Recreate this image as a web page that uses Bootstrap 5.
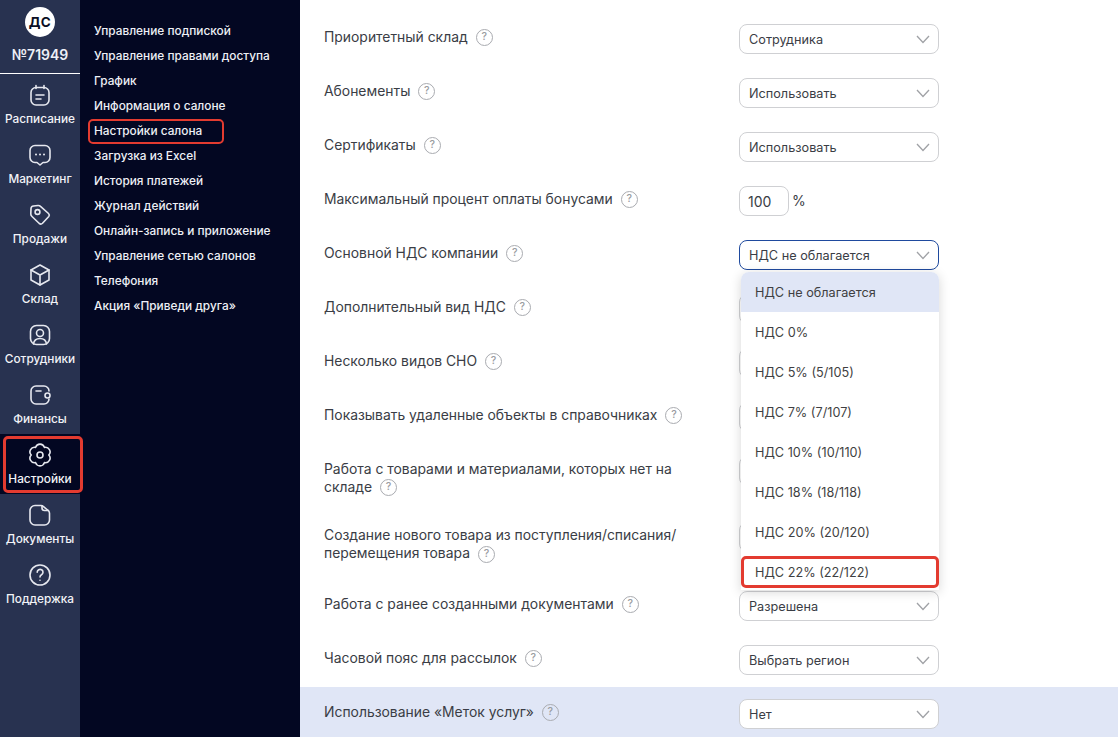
<!doctype html>
<html lang="ru"><head><meta charset="utf-8">
<link href="https://cdn.jsdelivr.net/npm/bootstrap@5.3.0/dist/css/bootstrap.min.css" rel="stylesheet">
<style>
html,body{height:100%}
body{font-family:Inter,"Noto Sans",sans-serif;font-size:13.9px;color:#3a3d45;overflow:hidden;background:#fff}
.shell{height:737px;overflow:hidden}
.rail{width:80px;background:#283250;color:#fff;flex:none}
.brand{height:74px;border-bottom:1px solid #fff;padding-top:7px}
.ava{width:30px;height:30px;border-radius:50%;background:#fff;color:#0b0f25;font-weight:700;font-size:13.5px;letter-spacing:.5px;line-height:30px;text-align:center}
.brand-no{font-size:14px;font-weight:600;line-height:18px;margin-top:9px;color:#eef0f6}
.rail-item{height:60px;padding-top:6px;font-size:11.8px;font-weight:500;line-height:14px;color:#f2f3f7;text-decoration:none;position:relative;white-space:nowrap}
.rail-item svg{width:24px;height:24px;margin-top:3px;margin-bottom:5px;flex:none;fill:none;stroke:#e6e8ef;stroke-width:1.6;stroke-linecap:round;stroke-linejoin:round}
.rail-item.on{background:#030722}
.mark-box{position:absolute;border:3px solid #e33b30;border-radius:5px;pointer-events:none}
.mb-rail{left:3px;right:-3px;top:2px;bottom:1px}
.sub{width:220px;background:#030722;flex:none;padding-top:19px}
.sub a{display:block;position:relative;height:25px;line-height:25px;padding-left:14px;color:#eef0f6;font-size:11.85px;font-weight:500;text-decoration:none;white-space:nowrap}
.mb-sub{left:8px;top:0;width:136px;height:25px;border-width:2.5px}
.main{flex:1;min-width:0;position:relative;padding-top:12px}
.set-row{display:flex;align-items:flex-start;padding:12px 0 12px 24px;height:54px}
.set-row.hl{background:#e0e6f6;height:50px;padding-bottom:0}
.set-row.tall-a{height:66px}
.set-row.tall-b{height:69px}
.set-row.tall-b .lbl{padding-top:5px;line-height:17.5px}
.lbl{width:385px;margin-right:30px;flex:none;line-height:18px;padding-top:4px}
.q{display:inline-flex;width:17px;height:17px;border:1px solid #a9abb0;border-radius:50%;color:#9a9ca1;font-size:10.5px;font-weight:500;align-items:center;justify-content:center;margin-left:8px;vertical-align:top;margin-top:1px;line-height:1}
.sel{width:200px;height:30px;border:1px solid #cfd0d3;border-radius:8px;background:#fff;padding:1px 9px 0;font-size:12.7px;line-height:28px;position:relative;flex:none}
.sel svg{position:absolute;right:8px;top:10px;width:14px;height:9px;fill:none;stroke:#a0a2a6;stroke-width:1.3}
.sel.open{border-color:#1f4a9e}
.num{width:50px;height:30px;border:1px solid #cfd0d3;border-radius:8px;padding:1px 8px 0;font-size:14px;line-height:28px;background:#fff}
.pct{font-size:14px;margin:4px 0 0 3px}
.drop{position:absolute;left:441px;top:272px;width:198px;height:318px;background:#fff;border-radius:8px 8px 0 0;box-shadow:0 2px 12px rgba(0,0,0,.16)}
.drop div{height:40px;line-height:42px;padding-left:14px;font-size:12.7px;color:#3f3f42;position:relative}
.drop div.act{background:#e0e6f6;border-radius:8px 8px 0 0}
.mb-opt{left:0;right:0;top:4px;height:32px}
</style></head><body>
<div class="shell d-flex">
<nav class="rail d-flex flex-column">
 <div class="brand d-flex flex-column align-items-center"><div class="ava">ДС</div><div class="brand-no">№71949</div></div>
 <a class="rail-item d-flex flex-column align-items-center" href="#"><svg viewBox="0 0 24 24"><rect x="3" y="4.500" width="18" height="17.500" rx="5"/><path d="M8 2.500v3M16 2.500v3M8 12h8M8 16h5"/></svg>Расписание</a>
 <a class="rail-item d-flex flex-column align-items-center" href="#"><svg viewBox="0 0 24 24"><path d="M7 2.500h10a5 5 0 0 1 5 5v7a5 5 0 0 1-5 5h-2l-3 2.500-3-2.500H7a5 5 0 0 1-5-5v-7a5 5 0 0 1 5-5z"/><path stroke-width="2" d="M8 11.500h.01M12 11.500h.01M16 11.500h.01"/></svg>Маркетинг</a>
 <a class="rail-item d-flex flex-column align-items-center" href="#"><svg viewBox="0 0 24 24"><path d="M5.500 3L10 2.500Q11.500 2.400 12.500 3.400L20.500 10.500Q22 12 20.800 13.500L14.500 20.300Q13 21.800 11.300 20.500L4 13.500Q2.800 12.400 2.800 11L3 5.500Q3.100 3.300 5.500 3z"/><circle cx="9.500" cy="9" r="2.400"/></svg>Продажи</a>
 <a class="rail-item d-flex flex-column align-items-center" href="#"><svg viewBox="0 0 24 24"><path d="M12 2l9 5v10l-9 5-9-5V7z"/><path d="M3 7l9 5 9-5M12 12v10"/></svg>Склад</a>
 <a class="rail-item d-flex flex-column align-items-center" href="#"><svg viewBox="0 0 24 24"><rect x="2.500" y="2.500" width="19" height="19" rx="6"/><circle cx="12" cy="10" r="3.500"/><path d="M5.500 21c.5-4 3-5.500 6.500-5.500s6 1.500 6.500 5.500"/></svg>Сотрудники</a>
 <a class="rail-item d-flex flex-column align-items-center" href="#"><svg viewBox="0 0 24 24"><path d="M21 8V8a5 5 0 0 0-5-5H8a5 5 0 0 0-5 5v8a5 5 0 0 0 5 5h8a5 5 0 0 0 5-5"/><path d="M8 8h5"/><rect x="17" y="10" width="5" height="5" rx="2.500"/></svg>Финансы</a>
 <a class="rail-item on d-flex flex-column align-items-center" href="#"><svg viewBox="0 0 24 24"><path d="M7.600 4.380A4.600 4.600 0 0 1 16.400 4.380A4.600 4.600 0 0 1 20.800 12A4.600 4.600 0 0 1 16.400 19.620A4.600 4.600 0 0 1 7.600 19.620A4.600 4.600 0 0 1 3.200 12A4.600 4.600 0 0 1 7.600 4.380z"/><circle cx="12" cy="12" r="3"/></svg>Настройки<span class="mark-box mb-rail"></span></a>
 <a class="rail-item d-flex flex-column align-items-center" href="#"><svg viewBox="0 0 24 24"><path d="M7 2.500h6q1.200 0 2.200.8l5 4.200q1.300 1.100 1.300 2.700V17a5 5 0 0 1-5 5H7a5 5 0 0 1-5-5V7.500a5 5 0 0 1 5-5z"/><path d="M14 2.700V5a2.500 2.500 0 0 0 2.500 2.500h4"/></svg>Документы</a>
 <a class="rail-item d-flex flex-column align-items-center" href="#"><svg viewBox="0 0 24 24"><circle cx="12" cy="12" r="10"/><path d="M9.200 9.200a2.900 2.900 0 1 1 4.300 2.600c-.9.500-1.500 1.100-1.500 2.200M12 17.200h.01"/></svg>Поддержка</a>
</nav>
<aside class="sub">
 <a href="#">Управление подпиской</a><a href="#">Управление правами доступа</a><a href="#">График</a><a href="#">Информация о салоне</a>
 <a href="#">Настройки салона<span class="mark-box mb-sub"></span></a>
 <a href="#">Загрузка из Excel</a><a href="#">История платежей</a><a href="#">Журнал действий</a><a href="#">Онлайн-запись и приложение</a><a href="#">Управление сетью салонов</a><a href="#">Телефония</a><a href="#">Акция «Приведи друга»</a>
</aside>
<main class="main">
 <div class="set-row"><div class="lbl">Приоритетный склад<span class="q">?</span></div><div class="sel">Сотрудника<svg viewBox="0 0 14 9"><path d="M1 1l6 6.500L13 1"/></svg></div></div>
 <div class="set-row"><div class="lbl">Абонементы<span class="q">?</span></div><div class="sel">Использовать<svg viewBox="0 0 14 9"><path d="M1 1l6 6.500L13 1"/></svg></div></div>
 <div class="set-row"><div class="lbl">Сертификаты<span class="q">?</span></div><div class="sel">Использовать<svg viewBox="0 0 14 9"><path d="M1 1l6 6.500L13 1"/></svg></div></div>
 <div class="set-row"><div class="lbl">Максимальный процент оплаты бонусами<span class="q">?</span></div><div class="num">100</div><div class="pct">%</div></div>
 <div class="set-row"><div class="lbl">Основной НДС компании<span class="q">?</span></div><div class="sel open">НДС не облагается<svg viewBox="0 0 14 9"><path d="M1 1l6 6.500L13 1"/></svg></div></div>
 <div class="set-row"><div class="lbl">Дополнительный вид НДС<span class="q">?</span></div><div class="sel"></div></div>
 <div class="set-row"><div class="lbl">Несколько видов СНО<span class="q">?</span></div><div class="sel"></div></div>
 <div class="set-row"><div class="lbl">Показывать удаленные объекты в справочниках<span class="q">?</span></div><div class="sel"></div></div>
 <div class="set-row tall-a"><div class="lbl">Работа с товарами и материалами, которых нет на складе<span class="q">?</span></div><div class="sel"></div></div>
 <div class="set-row tall-b"><div class="lbl">Создание нового товара из поступления/списания/перемещения товара<span class="q">?</span></div><div class="sel"></div></div>
 <div class="set-row"><div class="lbl">Работа с ранее созданными документами<span class="q">?</span></div><div class="sel">Разрешена<svg viewBox="0 0 14 9"><path d="M1 1l6 6.500L13 1"/></svg></div></div>
 <div class="set-row"><div class="lbl">Часовой пояс для рассылок<span class="q">?</span></div><div class="sel">Выбрать регион<svg viewBox="0 0 14 9"><path d="M1 1l6 6.500L13 1"/></svg></div></div>
 <div class="set-row hl"><div class="lbl">Использование «Меток услуг»<span class="q">?</span></div><div class="sel">Нет<svg viewBox="0 0 14 9"><path d="M1 1l6 6.500L13 1"/></svg></div></div>
 <div class="drop"><div class="act">НДС не облагается</div><div>НДС 0%</div><div>НДС 5% (5/105)</div><div>НДС 7% (7/107)</div><div>НДС 10% (10/110)</div><div>НДС 18% (18/118)</div><div>НДС 20% (20/120)</div><div>НДС 22% (22/122)<span class="mark-box mb-opt"></span></div></div>
</main>
</div>
</body></html>
